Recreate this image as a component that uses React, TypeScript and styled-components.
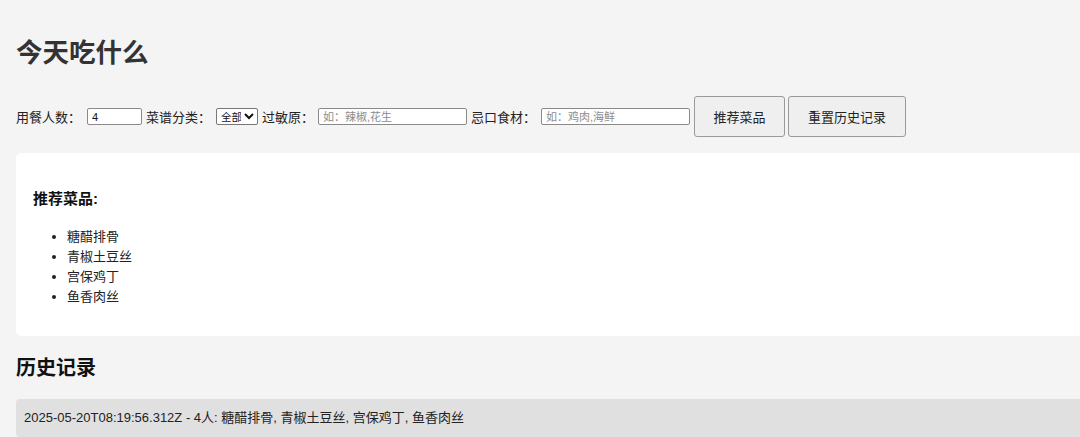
import React from "react";
import styled, { createGlobalStyle } from "styled-components";

const GlobalStyle = createGlobalStyle`
  html, body {
    margin: 0;
    padding: 0;
    background: #f4f4f4;
    overflow: hidden;
  }
  body {
    font-family: "Liberation Sans", "Noto Sans CJK SC", Arial, sans-serif;
    color: #222;
  }
`;

const Page = styled.div`
  width: 1240px;
  padding: 0 16px;
`;

const Title = styled.h1`
  margin: 0;
  padding-top: 36px;
  font-size: 26.5px;
  line-height: 34px;
  font-weight: 700;
  color: #333;
`;

const Controls = styled.div`
  display: flex;
  align-items: center;
  gap: 4px;
  margin-top: 26px;
  font-size: 13px;
  color: #222;
`;

const Label = styled.span<{ $gap?: number }>`
  margin-right: ${(p) => p.$gap ?? 1}px;
`;

const TextInput = styled.input<{ $w: number }>`
  width: ${(p) => p.$w}px;
  height: 17px;
  box-sizing: border-box;
  border: 1px solid #8a8a8a;
  border-radius: 2px;
  padding: 0 4px;
  font-size: 11px;
  font-family: "Liberation Sans", "Noto Sans CJK SC", sans-serif;
  background: #fff;
  color: #111;
  &::placeholder {
    color: #8c8c8c;
  }
`;

const Select = styled.select`
  height: 17px;
  width: 42px;
  box-sizing: border-box;
  border: 1px solid #777;
  border-radius: 2px;
  font-size: 10.5px;
  padding: 0;
  font-family: "Liberation Sans", "Noto Sans CJK SC", sans-serif;
  background: #fff;
  color: #111;
`;

const Button = styled.button<{ $w: number }>`
  width: ${(p) => p.$w}px;
  height: 41px;
  border: 1px solid #9a9a9a;
  border-radius: 3px;
  background: #efefef;
  font-size: 13px;
  font-family: "Liberation Sans", "Noto Sans CJK SC", sans-serif;
  color: #222;
  padding: 0;
  & + & {
    margin-left: -1px;
  }
`;

const Panel = styled.section`
  margin-top: 16px;
  background: #fff;
  border-radius: 5px;
  padding: 30px 17px 29px;
`;

const PanelTitle = styled.h3`
  margin: 0;
  font-size: 15px;
  line-height: 32px;
  font-weight: 700;
  color: #111;
`;

const DishList = styled.ul`
  margin: 12px 0 0;
  padding-left: 34px;
  font-size: 13px;
  line-height: 20px;
  color: #222;
`;

const HistoryTitle = styled.h2`
  margin: 18px 0 0;
  font-size: 20px;
  line-height: 28px;
  font-weight: 700;
  color: #111;
`;

const HistoryItem = styled.div`
  margin-top: 17px;
  background: #e0e0e0;
  border-radius: 4px;
  padding: 9px 8px;
  font-size: 13px;
  line-height: 20px;
  color: #222;
`;

const dishes = ["糖醋排骨", "青椒土豆丝", "宫保鸡丁", "鱼香肉丝"];

export default function App() {
  return (
    <Page>
      <GlobalStyle />
      <Title>今天吃什么</Title>
      <Controls>
        <Label $gap={2}>用餐人数：</Label>
        <TextInput $w={55} type="number" defaultValue={4} />
        <Label $gap={1}>菜谱分类：</Label>
        <Select defaultValue="all">
          <option value="all">全部</option>
        </Select>
        <Label $gap={0}>过敏原：</Label>
        <TextInput $w={149} placeholder="如：辣椒,花生" />
        <Label $gap={1}>忌口食材：</Label>
        <TextInput $w={149} placeholder="如：鸡肉,海鲜" />
        <Button $w={91}>推荐菜品</Button>
        <Button $w={118}>重置历史记录</Button>
      </Controls>
      <Panel>
        <PanelTitle>推荐菜品:</PanelTitle>
        <DishList>
          {dishes.map((d) => (
            <li key={d}>{d}</li>
          ))}
        </DishList>
      </Panel>
      <HistoryTitle>历史记录</HistoryTitle>
      <HistoryItem>2025-05-20T08:19:56.312Z - 4人: 糖醋排骨, 青椒土豆丝, 宫保鸡丁, 鱼香肉丝</HistoryItem>
    </Page>
  );
}
